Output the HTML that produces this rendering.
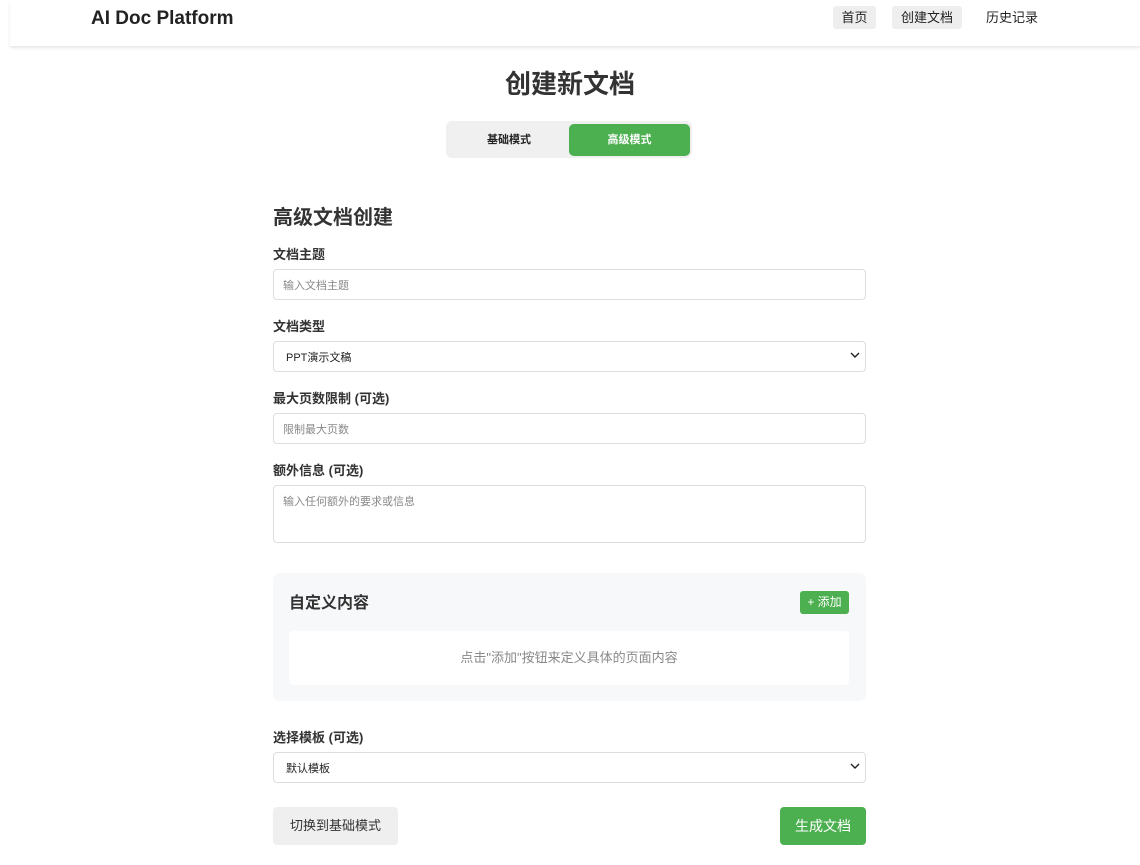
<!DOCTYPE html>
<html><head><meta charset="utf-8"><style>
*{margin:0;padding:0;box-sizing:border-box}
body{width:1140px;height:865px;background:#fff;font-family:"Liberation Sans","Noto Sans CJK SC",sans-serif;color:#333;position:relative;overflow:hidden}
.a{position:absolute}
.hdr{left:10px;top:0;width:1130px;height:46px;background:#fff;box-shadow:0 2px 3px rgba(0,0,0,0.1)}
.lbl{font-size:13px;font-weight:bold;color:#333;left:273px}
.inp{left:273px;width:593px;height:31px;border:1px solid #ddd;border-radius:4px;background:#fff;font-size:11px;color:#888;padding:7px 0 0 9px}
.sel{color:#222;padding-left:12px}
.chev{position:absolute;right:4px;top:7px}
</style></head><body>
<div class="a hdr"></div>
<div class="a" style="left:91px;top:8px;font-size:19px;font-weight:bold;color:#222">AI Doc Platform</div>
<div class="a" style="left:833px;top:6px;width:43px;height:23px;background:#eee;border-radius:3px;font-size:13px;text-align:center;line-height:23px;color:#222">首页</div>
<div class="a" style="left:892px;top:6px;width:70px;height:23px;background:#eee;border-radius:3px;font-size:13px;text-align:center;line-height:23px;color:#222">创建文档</div>
<div class="a" style="left:986px;top:6px;font-size:13px;line-height:23px;color:#222">历史记录</div>
<div class="a" style="left:0;width:1140px;top:64px;text-align:center;font-size:26px;font-weight:bold;color:#333">创建新文档</div>
<div class="a" style="left:446px;top:121px;width:246px;height:37px;background:#f0f0f0;border-radius:6px"></div>
<div class="a" style="left:449px;top:124px;width:120px;height:32px;font-size:11px;font-weight:bold;text-align:center;line-height:32px;color:#222">基础模式</div>
<div class="a" style="left:569px;top:124px;width:121px;height:32px;background:#4caf50;border-radius:5px;font-size:11px;font-weight:bold;text-align:center;line-height:32px;color:#fff">高级模式</div>
<div class="a" style="left:273px;top:201px;font-size:20px;font-weight:bold;color:#333">高级文档创建</div>
<div class="a lbl" style="top:244px">文档主题</div>
<div class="a inp" style="top:269px">输入文档主题</div>
<div class="a lbl" style="top:316px">文档类型</div>
<div class="a inp sel" style="top:341px">PPT演示文稿<svg class="chev" width="12" height="12" viewBox="0 0 12 12"><path d="M2 4l4 4 4-4" stroke="#222" stroke-width="1.4" fill="none"/></svg></div>
<div class="a lbl" style="top:388px">最大页数限制 (可选)</div>
<div class="a inp" style="top:413px">限制最大页数</div>
<div class="a lbl" style="top:460px">额外信息 (可选)</div>
<div class="a inp" style="top:485px;height:58px">输入任何额外的要求或信息</div>
<div class="a" style="left:273px;top:573px;width:593px;height:128px;background:#f7f8fa;border-radius:7px"></div>
<div class="a" style="left:289px;top:589px;font-size:16px;font-weight:bold;color:#333">自定义内容</div>
<div class="a" style="left:800px;top:591px;width:49px;height:23px;background:#4caf50;border-radius:3px;color:#fff;font-size:12px;text-align:center;line-height:23px">+ 添加</div>
<div class="a" style="left:289px;top:631px;width:560px;height:54px;background:#fff;border-radius:4px;text-align:center;line-height:54px;font-size:13px;color:#888">点击"添加"按钮来定义具体的页面内容</div>
<div class="a lbl" style="top:727px">选择模板 (可选)</div>
<div class="a inp sel" style="top:752px">默认模板<svg class="chev" width="12" height="12" viewBox="0 0 12 12"><path d="M2 4l4 4 4-4" stroke="#222" stroke-width="1.4" fill="none"/></svg></div>
<div class="a" style="left:273px;top:807px;width:125px;height:38px;background:#efefef;border-radius:4px;text-align:center;line-height:38px;font-size:13px;color:#333">切换到基础模式</div>
<div class="a" style="left:780px;top:807px;width:86px;height:38px;background:#4caf50;border-radius:4px;text-align:center;line-height:38px;font-size:14px;color:#fff">生成文档</div>
</body></html>
